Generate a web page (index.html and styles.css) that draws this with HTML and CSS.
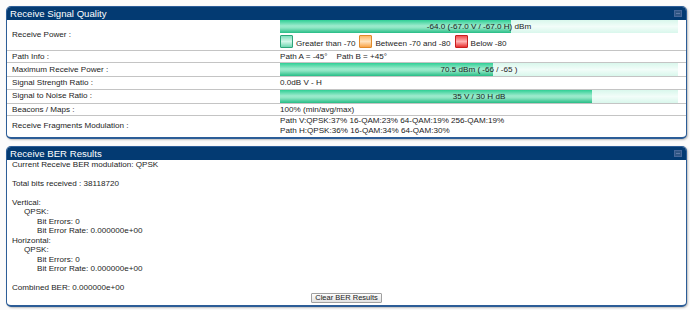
FILE: index.html
```html
<!DOCTYPE html>
<html lang="en">
<head>
    <meta charset="UTF-8">
    <title>Receive Signal Quality</title>
    <link rel="stylesheet" href="styles.css">
</head>
<body>
    <div class="panel">
        <div class="panel-head">
            <span>Receive Signal Quality</span>
            <span class="min-btn"></span>
        </div>
        <table class="stats">
            <tr class="tall">
                <td class="label">Receive Power :</td>
                <td>
                    <div class="bar"><div class="fill" style="width: 58%"></div><span>-64.0 (-67.0 V / -67.0 H) dBm</span></div>
                    <div class="legend">
                        <span class="swatch green"></span><span>Greater than -70</span>
                        <span class="swatch orange"></span><span>Between -70 and -80</span>
                        <span class="swatch red"></span><span>Below -80</span>
                    </div>
                </td>
            </tr>
            <tr>
                <td class="label">Path Info :</td>
                <td>Path A = -45°&nbsp;&nbsp;&nbsp; Path B = +45°</td>
            </tr>
            <tr class="bar-row">
                <td class="label">Maximum Receive Power :</td>
                <td><div class="bar"><div class="fill" style="width: 53.5%"></div><span>70.5 dBm ( -66 / -65 )</span></div></td>
            </tr>
            <tr>
                <td class="label">Signal Strength Ratio :</td>
                <td>0.0dB V - H</td>
            </tr>
            <tr class="bar-row">
                <td class="label">Signal to Noise Ratio :</td>
                <td><div class="bar"><div class="fill" style="width: 78.5%"></div><span>35 V / 30 H dB</span></div></td>
            </tr>
            <tr>
                <td class="label">Beacons / Maps :</td>
                <td>100% (min/avg/max)</td>
            </tr>
            <tr class="double">
                <td class="label">Receive Fragments Modulation :</td>
                <td>Path V:QPSK:37% 16-QAM:23% 64-QAM:19% 256-QAM:19%<br>Path H:QPSK:36% 16-QAM:34% 64-QAM:30%</td>
            </tr>
        </table>
    </div>

    <div class="panel">
        <div class="panel-head">
            <span>Receive BER Results</span>
            <span class="min-btn"></span>
        </div>
        <div class="ber">
            <p>Current Receive BER modulation: QPSK</p>
            <p>&nbsp;</p>
            <p>Total bits received : 38118720</p>
            <p>&nbsp;</p>
            <p>Vertical:</p>
            <p class="ind1">QPSK:</p>
            <p class="ind2">Bit Errors: 0</p>
            <p class="ind2">Bit Error Rate: 0.000000e+00</p>
            <p>Horizontal:</p>
            <p class="ind1">QPSK:</p>
            <p class="ind2">Bit Errors: 0</p>
            <p class="ind2">Bit Error Rate: 0.000000e+00</p>
            <p>&nbsp;</p>
            <p>Combined BER: 0.000000e+00</p>
            <div class="actions">
                <button type="button" class="btn">Clear BER Results</button>
            </div>
        </div>
    </div>
</body>
</html>
```

FILE: styles.css
```css
:root {
    --navy: #033a72;
    --frame: #2c5d97;
    --text: #1c1c1c;
    --rule: #c4c4c4;
}

* {
    box-sizing: border-box;
    margin: 0;
    padding: 0;
}

body {
    font-family: "Liberation Sans", Arial, sans-serif;
    font-size: 8.1px;
    color: var(--text);
    background: #fbfbfb;
    padding: 6px 3px 0 6px;
}

.panel {
    width: 681px;
    background: #fff;
    border: 1px solid var(--frame);
    border-bottom-width: 2px;
    border-radius: 5px;
    box-shadow: 1px 1px 2px rgba(0, 0, 0, 0.25);
    overflow: hidden;
    margin-bottom: 7px;
}

.panel-head {
    display: flex;
    align-items: center;
    justify-content: space-between;
    height: 13px;
    padding: 0 4px 0 3px;
    background: var(--navy);
    color: #fff;
    font-size: 9.6px;
    line-height: 13px;
}

.min-btn {
    width: 8px;
    height: 7px;
    background: #315684;
    border: 1px solid #46679a;
    position: relative;
}

.min-btn::after {
    content: '';
    position: absolute;
    left: 1px;
    right: 1px;
    top: 2px;
    height: 1px;
    background: #5d7aa6;
}

.stats {
    width: 100%;
    border-collapse: collapse;
}

.stats td {
    padding: 0;
    height: 12.5px;
    line-height: 11.5px;
    vertical-align: middle;
    border-bottom: 1px solid var(--rule);
}

.stats tr:last-child td {
    border-bottom: none;
}

.stats tr.tall td {
    height: 30px;
    padding-bottom: 1px;
}

.stats tr.bar-row td {
    height: 14px;
}

.stats tr.double td {
    height: 21px;
    line-height: 10px;
}

.stats tr td.label {
    width: 273px;
    padding-left: 5px;
}

.bar {
    position: relative;
    width: 398px;
    height: 13px;
    background: linear-gradient(#d9f7ec, #f2fdf9 50%, #d9f7ec);
    text-align: center;
    line-height: 13px;
}

.fill {
    position: absolute;
    left: 0;
    top: 0;
    bottom: 0;
    background: linear-gradient(#2fcf95, #9debcd 45%, #8fe6c4 60%, #27bd86);
}

.bar span {
    position: relative;
}

.legend {
    display: flex;
    align-items: flex-end;
    height: 14px;
    margin-top: 1px;
    line-height: 9px;
}

.swatch {
    width: 13px;
    height: 13px;
    margin-right: 3px;
    border: 1px solid;
    border-radius: 1px;
}

.swatch + span {
    margin-right: 4px;
}

.green {
    border-color: #2da57a;
    background: linear-gradient(#7fe0bd, #d3f6e9 50%, #6fd7b1);
}

.orange {
    border-color: #e08a2a;
    background: linear-gradient(#ffb866, #ffe2bd 50%, #f9a448);
}

.red {
    border-color: #c81f1f;
    background: linear-gradient(#f24d4d, #ffb3b3 50%, #e83030);
}

.ber {
    padding: 0 5px 2px;
    line-height: 9.5px;
}

.ind1 {
    padding-left: 12px;
}

.ind2 {
    padding-left: 25px;
}

.actions {
    display: flex;
    justify-content: center;
}

.btn {
    font-family: "Liberation Sans", Arial, sans-serif;
    font-size: 7.5px;
    color: #222;
    height: 10px;
    line-height: 8px;
    padding: 0 3px;
    border: 1px solid #a0a0a0;
    border-radius: 1px;
    background: linear-gradient(#fdfdfd, #e2e2e2);
}
```
